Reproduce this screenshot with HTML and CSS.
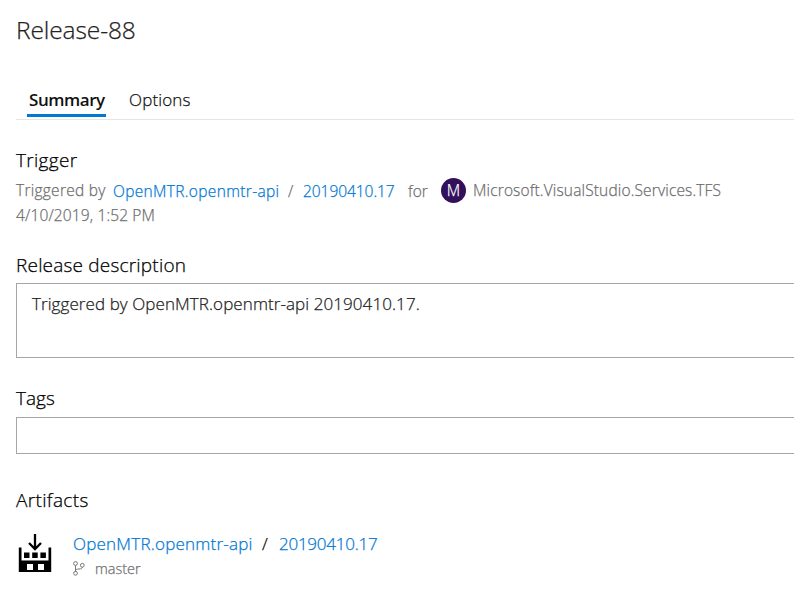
FILE: index.html
```html
<!DOCTYPE html>
<html lang="en">
<head>
<meta charset="utf-8">
<title>Release-88</title>
<link rel="stylesheet" href="styles.css">
</head>
<body>
<main class="release">
  <h1 class="title">Release-88</h1>
  <nav class="tabs">
    <a class="tab tab-active">Summary</a>
    <a class="tab tab-options">Options</a>
  </nav>
  <section class="trigger">
    <h2 class="heading h-trigger">Trigger</h2>
    <div class="trigger-line">
      <span class="t-by">Triggered by</span>
      <a class="link t-repo">OpenMTR.openmtr-api</a>
      <span class="t-slash">/</span>
      <a class="link t-build">20190410.17</a>
      <span class="t-for">for</span>
      <span class="avatar">M</span>
      <span class="t-user">Microsoft.VisualStudio.Services.TFS</span>
    </div>
    <div class="date">4/10/2019, 1:52 PM</div>
  </section>
  <section class="description">
    <h2 class="heading h-desc">Release description</h2>
    <div class="box desc-box">Triggered by OpenMTR.openmtr-api 20190410.17.</div>
  </section>
  <section class="tags">
    <h2 class="heading h-tags">Tags</h2>
    <div class="box tags-box"></div>
  </section>
  <section class="artifacts">
    <h2 class="heading h-art">Artifacts</h2>
    <div class="artifact">
      <svg class="build-icon" width="34" height="38" viewBox="0 0 34 38">
        <path d="M17 0v15M11 9l6 6 6-6" fill="none" stroke="#000" stroke-width="2.300"/>
        <path fill-rule="evenodd" d="M.8 13.500h2.700v13h27V13.500h2.700V38H.8zM9 30v6h6v-6zM20 30v6h6v-6z"/>
        <path d="M6 18.500h5.500V24H6zM14.200 18.500h5.500V24h-5.500zM22.400 18.500h5.500V24h-5.500z"/>
      </svg>
      <div>
        <div class="artifact-line">
          <a class="link a-repo">OpenMTR.openmtr-api</a>
          <span class="a-slash">/</span>
          <a class="link a-build">20190410.17</a>
        </div>
        <div class="branch">
          <svg width="12" height="15" viewBox="0 0 12 15" fill="none" stroke="#777" stroke-width="1">
            <circle cx="2.500" cy="2.500" r="1.900"/><circle cx="2.500" cy="12.300" r="1.900"/><circle cx="9.300" cy="4.300" r="1.900"/>
            <path d="M2.500 4.500v6M2.500 10.400c0-2 1-2.400 3.500-2.400 2.300 0 3.300-.5 3.300-1.800"/>
          </svg>
          <span class="b-name">master</span>
        </div>
      </div>
    </div>
  </section>
</main>
</body>
</html>
```
FILE: styles.css
```css
* { box-sizing: border-box; }
body { margin: 0; background: #fff; color: #000; font-family: "Open Sans", sans-serif; font-weight: 300; -webkit-text-stroke: .25px; overflow: hidden; }
h1, h2 { margin: 0; }
.release { padding: 13px 0 0 16px; white-space: nowrap; }
.title { height: 35px; line-height: 34px; font-size: 24.500px; font-weight: 300; letter-spacing: -.1px; color: #222; }
.tabs { display: flex; height: 72px; padding: 38px 0 0 11px; border-bottom: 1px solid #e6e6e6; line-height: 28px; font-size: 17px; color: #111; }
.tab { height: 31px; }
.tab-active { width: 79px; padding-left: 2px; font-weight: 600; letter-spacing: -.45px; border-bottom: 3px solid #0078d4; -webkit-text-stroke: 0; }
.tab-options { margin-left: 23px; letter-spacing: .15px; }
.heading { height: 28px; line-height: 28px; font-size: 19px; font-weight: 300; }
.trigger { height: 105px; padding-top: 26px; font-size: 15.500px; color: #6e6e6e; }
.h-trigger { color: #000; letter-spacing: .3px; }
.h-desc { letter-spacing: .2px; }
.h-art { letter-spacing: .35px; }
.trigger-line { display: flex; height: 32px; line-height: 32px; align-items: center; }
.link { color: #0078d4; }
.t-by { width: 97px; letter-spacing: .27px; }
.t-repo { width: 175px; letter-spacing: .34px; }
.t-slash { width: 15px; }
.t-build { width: 105px; letter-spacing: -.05px; }
.t-repo, .t-slash, .t-build, .t-for { padding-top: 1px; }
.t-for { width: 33px; }
.avatar { width: 25px; height: 25px; border-radius: 50%; background: #32105c; color: #fff; line-height: 25px; text-align: center; margin-right: 7px; }
.t-user { letter-spacing: .15px; }
.date { height: 19px; line-height: 19px; letter-spacing: .14px; }
.description { padding-top: 26px; height: 133px; }
.box { border: 1px solid #a6a6a6; border-right: 0; }
.desc-box { height: 75px; margin-top: 4px; padding-left: 15px; line-height: 40px; font-size: 17px; letter-spacing: .08px; color: #222; }
.tags { padding-top: 26px; height: 103px; }
.tags-box { height: 37px; margin-top: 5px; }
.artifacts { padding-top: 25px; }
.artifact { display: flex; padding-top: 17px; }
.build-icon { margin: 3px 21px 0 2px; }
.artifact-line { display: flex; height: 26px; line-height: 26px; font-size: 17px; }
.a-repo { width: 189px; letter-spacing: .22px; }
.a-slash { width: 17px; }
.a-build { letter-spacing: -.25px; }
.branch { display: flex; align-items: center; height: 23px; color: #6e6e6e; font-size: 14.500px; }
.b-name { margin-left: 10px; }
```
